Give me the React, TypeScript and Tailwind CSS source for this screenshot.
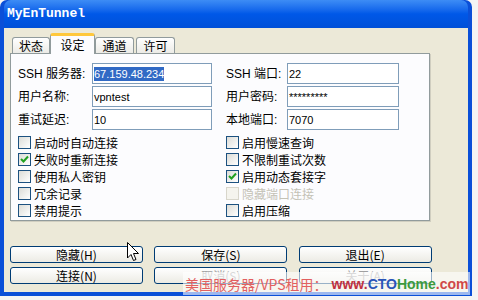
import React from 'react'

const cjk = "font-['Noto_Sans_CJK_SC',sans-serif]"
const latin = "font-['Liberation_Sans','Noto_Sans_CJK_SC',sans-serif]"

const Check = ({ checked, disabled }: { checked?: boolean; disabled?: boolean }) => (
    <span
        className={`flex h-[13px] w-[13px] shrink-0 items-center justify-center border ${disabled ? 'border-[#d8d6cb] bg-[#f5f4ee]' : 'border-[#1c5180] bg-gradient-to-br from-[#dcdcd7] to-white'}`}
    >
        {checked && (
            <svg width="9" height="9" viewBox="0 0 9 9">
                <path d="M1 4 L3.5 6.5 L8 1.5" fill="none" stroke="#21a121" strokeWidth="2" />
            </svg>
        )}
    </span>
)

const Option = ({ label, checked, disabled }: { label: string; checked?: boolean; disabled?: boolean }) => (
    <div className="flex h-[17px] items-center gap-[3px]">
        <Check checked={checked} disabled={disabled} />
        <span className={`${cjk} text-[12px] leading-none ${disabled ? 'text-[#c4c2b6]' : 'text-black'}`}>{label}</span>
    </div>
)

const Field = ({ label, value, labelW, inputW, selected }: { label: string; value: string; labelW: string; inputW: string; selected?: boolean }) => (
    <div className="flex h-[21px] items-center">
        <span className={`${latin} ${labelW} text-[12px] leading-none text-black`}>{label}</span>
        <div className={`${inputW} flex h-[21px] items-center border border-[#7f9db9] bg-white px-[1px]`}>
            <span className={`${latin} text-[11px] leading-[14px] ${selected ? 'bg-[#316ac5] text-white' : 'text-black'}`}>{value}</span>
        </div>
    </div>
)

const Btn = ({ label, disabled }: { label: string; disabled?: boolean }) => (
    <div className="flex h-[17px] w-[133px] items-center justify-center rounded-[3px] border border-[#003c74] bg-gradient-to-b from-white to-[#ecebe4]">
        <span className={`${cjk} text-[12px] leading-none ${disabled ? 'text-[#a0a0a0]' : 'text-black'}`}>{label}</span>
    </div>
)

export default function App() {
    return (
        <main className="relative h-[300px] w-[478px] overflow-hidden bg-[#f4f4f4]">
            <div className="flex h-[296px] w-[472px] flex-col rounded-t-[7px] bg-[#0a4fd8] px-[4px] pb-[4px]">
                <div className="flex h-[28px] items-center rounded-t-[7px] bg-gradient-to-b from-[#3d8cf5] via-[#0058e8] to-[#0050d8] px-[3px]">
                    <span className="font-['Liberation_Mono',monospace] text-[13px] font-bold text-white">MyEnTunnel</span>
                </div>
                <div className="flex flex-1 flex-col bg-[#ece9d8] px-[6px] pt-[5px]">
                    {/* tabs */}
                    <div className="flex h-[20px] items-end pl-[2px]">
                        <div className={`${cjk} flex h-[16px] w-[38px] items-center justify-center rounded-t-[3px] border border-b-0 border-[#919b9c] bg-gradient-to-b from-white to-[#ecebe6] text-[12px] leading-none`}>状态</div>
                        <div className={`${cjk} relative z-10 -mb-[1px] flex h-[21px] w-[45px] items-center justify-center rounded-t-[3px] border-x border-t-[3px] border-x-[#919b9c] border-t-[#ffc83c] bg-[#fcfcfe] text-[12px] leading-none`}>设定</div>
                        <div className={`${cjk} flex h-[16px] w-[39px] items-center justify-center rounded-t-[3px] border border-b-0 border-[#919b9c] bg-gradient-to-b from-white to-[#ecebe6] text-[12px] leading-none`}>通道</div>
                        <div className={`${cjk} ml-[2px] flex h-[16px] w-[39px] items-center justify-center rounded-t-[3px] border border-b-0 border-[#919b9c] bg-gradient-to-b from-white to-[#ecebe6] text-[12px] leading-none`}>许可</div>
                    </div>
                    {/* panel */}
                    <div className="flex h-[168px] w-[420px] flex-col border border-[#919b9c] bg-[#fcfcfe] pl-[7px] pt-[9px] shadow-[1px_1px_0_#d0cec0]">
                        <div className="flex gap-[14px]">
                            <div className="flex w-[194px] flex-col gap-[2px]">
                                <Field label="SSH 服务器:" value="67.159.48.234" labelW="w-[74px]" inputW="w-[120px]" selected />
                                <Field label="用户名称:" value="vpntest" labelW="w-[74px]" inputW="w-[120px]" />
                                <Field label="重试延迟:" value="10" labelW="w-[74px]" inputW="w-[120px]" />
                            </div>
                            <div className="flex flex-col gap-[2px]">
                                <Field label="SSH 端口:" value="22" labelW="w-[61px]" inputW="w-[112px]" />
                                <Field label="用户密码:" value="*********" labelW="w-[61px]" inputW="w-[112px]" />
                                <Field label="本地端口:" value="7070" labelW="w-[61px]" inputW="w-[112px]" />
                            </div>
                        </div>
                        <div className="mt-[4px] flex gap-[14px]">
                            <div className="flex w-[194px] flex-col">
                                <Option label="启动时自动连接" />
                                <Option label="失败时重新连接" checked />
                                <Option label="使用私人密钥" />
                                <Option label="冗余记录" />
                                <Option label="禁用提示" />
                            </div>
                            <div className="flex flex-col">
                                <Option label="启用慢速查询" />
                                <Option label="不限制重试次数" />
                                <Option label="启用动态套接字" checked />
                                <Option label="隐藏端口连接" disabled />
                                <Option label="启用压缩" />
                            </div>
                        </div>
                    </div>
                    {/* buttons */}
                    <div className="mt-[25px] grid w-[422px] grid-cols-3 gap-x-[11px] gap-y-[4px]">
                        <Btn label="隐藏(H)" />
                        <Btn label="保存(S)" />
                        <Btn label="退出(E)" />
                        <Btn label="连接(N)" />
                        <Btn label="取消(S)" disabled />
                        <Btn label="关于(A)" disabled />
                    </div>
                </div>
            </div>

            {/* mouse cursor */}
            <svg className="absolute left-[127px] top-[242px]" width="13" height="21" viewBox="0 0 13 21">
                <path d="M0.5 0.5 L0.5 16 L4 12.5 L6.5 18.5 L9 17.5 L6.5 11.5 L11.5 11.5 Z" fill="white" stroke="black" strokeWidth="1" />
            </svg>

            {/* watermark */}
            <div className="absolute left-[183px] top-[272px] flex h-[23px] w-[287px] items-center bg-white/60 pl-[2px]">
                <span className={`${cjk} text-[14px] leading-none text-[#e26060]`}>美国服务器/VPS租用：</span>
                <span className="ml-[4px] font-['Liberation_Sans',sans-serif] text-[14px] font-bold leading-none">
                    <span className="text-[#c03040]">www.</span>
                    <span className="text-[#2a55b8]">CTO</span>
                    <span className="text-[#3c9a3c]">Home</span>
                    <span className="text-[#d04848]">.com</span>
                </span>
            </div>
        </main>
    )
}
